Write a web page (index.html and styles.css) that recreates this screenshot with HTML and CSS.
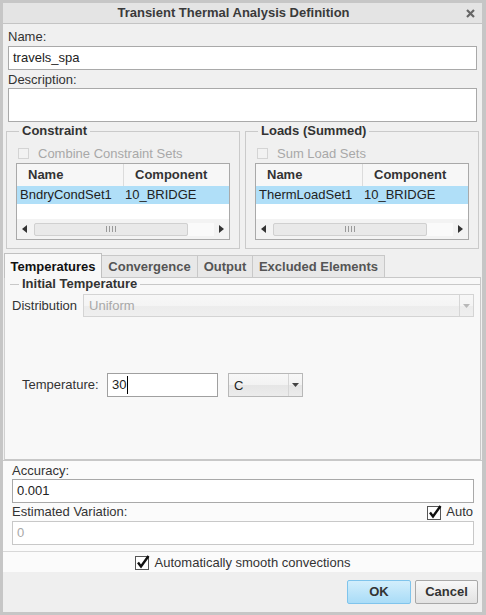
FILE: index.html
```html
<!DOCTYPE html>
<html>
<head>
<meta charset="utf-8">
<title>Transient Thermal Analysis Definition</title>
<link rel="stylesheet" href="styles.css">
</head>
<body>
<div class="window">
  <div class="titlebar">
    <span class="title">Transient Thermal Analysis Definition</span>
    <svg class="close" width="9" height="9" viewBox="0 0 9 9"><path d="M1 1 L8 8 M8 1 L1 8" stroke="#666" stroke-width="2.2" fill="none"/></svg>
  </div>

  <div class="top">
    <div class="lbl lbl-name">Name:</div>
    <div class="input">travels_spa</div>
    <div class="lbl lbl-desc">Description:</div>
    <div class="textarea"></div>

    <div class="groups">
      <fieldset class="group">
        <legend>Constraint</legend>
        <div class="check-row"><span class="cb-off"></span><span>Combine Constraint Sets</span></div>
        <div class="table">
          <div class="thead"><div class="c1">Name</div><div class="c2">Component</div></div>
          <div class="trow"><div class="c1">BndryCondSet1</div><div class="c2">10_BRIDGE</div></div>
          <div class="tempty"></div>
          <div class="hscroll">
            <div class="sbtn"><svg width="5" height="8" viewBox="0 0 5 8"><path d="M5 0 L0 4 L5 8 Z" fill="#333"/></svg></div>
            <div class="thumb"><span class="grip"><i></i><i></i><i></i><i></i></span></div>
            <div class="strack"></div>
            <div class="sbtn"><svg width="5" height="8" viewBox="0 0 5 8"><path d="M0 0 L5 4 L0 8 Z" fill="#333"/></svg></div>
          </div>
        </div>
      </fieldset>
      <fieldset class="group">
        <legend>Loads (Summed)</legend>
        <div class="check-row"><span class="cb-off"></span><span>Sum Load Sets</span></div>
        <div class="table">
          <div class="thead"><div class="c1">Name</div><div class="c2">Component</div></div>
          <div class="trow"><div class="c1">ThermLoadSet1</div><div class="c2">10_BRIDGE</div></div>
          <div class="tempty"></div>
          <div class="hscroll">
            <div class="sbtn"><svg width="5" height="8" viewBox="0 0 5 8"><path d="M5 0 L0 4 L5 8 Z" fill="#333"/></svg></div>
            <div class="thumb"><span class="grip"><i></i><i></i><i></i><i></i></span></div>
            <div class="strack"></div>
            <div class="sbtn"><svg width="5" height="8" viewBox="0 0 5 8"><path d="M0 0 L5 4 L0 8 Z" fill="#333"/></svg></div>
          </div>
        </div>
      </fieldset>
    </div>
  </div>

  <div class="tabs">
    <div class="tab active t1">Temperatures</div>
    <div class="tab t2">Convergence</div>
    <div class="tab t3">Output</div>
    <div class="tab t4">Excluded Elements</div>
    <div class="tabfill"></div>
  </div>

  <div class="panel">
    <div class="sect-title"><span>Initial Temperature</span></div>
    <div class="dist-row">
      <span class="lbl">Distribution</span>
      <div class="select disabled"><span class="sel-text">Uniform</span><span class="sel-arrow"><svg width="7" height="4" viewBox="0 0 7 4"><path d="M0 0 L7 0 L3.5 4 Z" fill="#b8b8b8"/></svg></span></div>
    </div>
    <div class="temp-row">
      <span class="lbl">Temperature:</span>
      <div class="input temp-input">30<span class="caret"></span></div>
      <div class="select unit"><span class="sel-text">C</span><span class="sel-arrow"><svg width="7" height="4" viewBox="0 0 7 4"><path d="M0 0 L7 0 L3.5 4 Z" fill="#444"/></svg></span></div>
    </div>
  </div>

  <div class="accuracy">
    <div class="lbl row-lbl">Accuracy:</div>
    <div class="input">0.001</div>
    <div class="lbl row-lbl est-row">
      <span>Estimated Variation:</span>
      <span class="auto">
        <svg class="cb-on" width="15" height="15" viewBox="0 0 15 15"><rect x="0.5" y="1.5" width="13" height="13" fill="#fff" stroke="#555"/><path d="M3 7.5 L6 11.5 L13.5 1" stroke="#111" stroke-width="2.4" fill="none"/></svg>
        <span>Auto</span>
      </span>
    </div>
    <div class="input disabled-input">0</div>
  </div>

  <div class="smooth">
    <svg class="cb-on" width="15" height="15" viewBox="0 0 15 15"><rect x="0.5" y="1.5" width="13" height="13" fill="#fff" stroke="#555"/><path d="M3 7.5 L6 11.5 L13.5 1" stroke="#111" stroke-width="2.4" fill="none"/></svg>
    <span>Automatically smooth convections</span>
  </div>

  <div class="buttons">
    <div class="btn ok">OK</div>
    <div class="btn cancel">Cancel</div>
  </div>
</div>
</body>
</html>
```

FILE: styles.css
```css
* { box-sizing: border-box; }
html, body { margin: 0; padding: 0; }
body {
  width: 486px;
  height: 615px;
  overflow: hidden;
  font-family: "Liberation Sans", Arial, sans-serif;
  font-size: 13px;
  color: #333;
  background: #c6c6c6;
}
.window {
  width: 486px;
  height: 615px;
  border-style: solid;
  border-color: #c6c6c6;
  border-width: 3px 4px 3px 3px;
  display: flex;
  flex-direction: column;
  background: #f0f0f0;
}

/* title */
.titlebar {
  flex: none;
  height: 21px;
  background: #e4e4e4;
  border-bottom: 1px solid #c4c4c4;
  display: flex;
  align-items: center;
  justify-content: center;
  padding-right: 18px;
  position: relative;
}
.title { font-weight: bold; color: #3a3a3a; line-height: 20px; }
.close { position: absolute; right: 7px; top: 6px; }

/* top section */
.top { flex: none; padding: 0 5px 4px 5px; }
.lbl { line-height: 16px; }
.lbl-name { height: 22px; padding-top: 5px; }
.lbl-desc { height: 18px; padding-top: 2px; }
.input {
  height: 24px;
  border: 1px solid #a9a9a9;
  background: #fff;
  padding-left: 4px;
  line-height: 22px;
  color: #222;
}
.textarea { height: 34px; border: 1px solid #a9a9a9; background: #fff; }

.groups { display: flex; gap: 5px; margin: 1px -2px 0 -2px; }
.group {
  flex: 1;
  min-width: 0;
  margin: 0;
  padding: 0 9px 8px 9px;
  border: 1px solid #cacaca;
}
.group legend {
  font-weight: bold;
  line-height: 16px;
  padding: 0 3px;
  margin-left: 3px;
  color: #333;
}
.check-row {
  margin-top: 6px;
  height: 16px;
  display: flex;
  align-items: center;
  gap: 9px;
  color: #a8a8a8;
}
.cb-off {
  width: 11px;
  height: 11px;
  margin-left: 2px;
  border: 1px solid #d4d4d4;
  background: #f2f2f2;
}
.table {
  margin-top: 2px;
  height: 77px;
  border: 1px solid #a9a9a9;
  background: #fff;
  display: flex;
  flex-direction: column;
}
.thead {
  flex: none;
  height: 22px;
  display: flex;
  font-weight: bold;
  line-height: 22px;
  background: #f7f7f7;
  color: #333;
}
.thead .c1 { width: 107px; padding-left: 11px; border-right: 1px solid #dcdcdc; }
.thead .c2 { padding-left: 11px; }
.trow {
  flex: none;
  height: 18px;
  display: flex;
  line-height: 18px;
  background: #b0dff8;
  color: #222;
}
.trow .c1 { width: 107px; padding-left: 3px; }
.trow .c2 { padding-left: 1px; }
.tempty { flex: 1; }
.hscroll {
  flex: none;
  height: 20px;
  display: flex;
  align-items: center;
  background: #f3f3f3;
}
.sbtn {
  width: 15px;
  height: 20px;
  display: flex;
  align-items: center;
  justify-content: center;
}
.thumb {
  width: 154px;
  height: 13px;
  margin-left: 2px;
  background: #e9e9e9;
  border: 1px solid #d0d0d0;
  border-radius: 2px;
  display: flex;
  align-items: center;
  justify-content: center;
}
.grip { display: flex; gap: 2px; }
.grip i { display: block; width: 1px; height: 6px; background: #9a9a9a; }
.strack { flex: 1; height: 13px; background: #fafafa; }

/* tabs */
.tabs {
  flex: none;
  height: 25px;
  display: flex;
  align-items: flex-end;
  margin: 0 1px;
}
.tab {
  height: 23px;
  padding-top: 3px;
  line-height: 16px;
  text-align: center;
  font-weight: bold;
  color: #555;
  background: #e8e8e8;
  border-top: 1px solid #c8c8c8;
  border-right: 1px solid #c8c8c8;
  border-bottom: 1px solid #c8c8c8;
}
.tab.active {
  height: 25px;
  padding-top: 5px;
  color: #111;
  background: #f8f8f8;
  border-left: 1px solid #c0c0c0;
  border-right: 1px solid #c0c0c0;
  border-top: 1px solid #c0c0c0;
  border-bottom: none;
}
.t1 { width: 98px; }
.t2 { width: 96px; }
.t3 { width: 55px; }
.t4 { width: 132px; }
.tabfill { flex: 1; height: 1px; border-bottom: 1px solid #c8c8c8; }

/* panel */
.panel {
  flex: 1;
  margin: 0 1px;
  background: #f8f8f8;
  border-left: 1px solid #d0d0d0;
  border-right: 1px solid #c8c8c8;
  border-bottom: 1px solid #c8c8c8;
  padding: 0 6px 0 7px;
}
.sect-title {
  height: 12px;
  display: flex;
  align-items: center;
  margin-left: -2px;
  margin-right: -6px;
  font-weight: bold;
  line-height: 12px;
  color: #333;
}
.sect-title::before {
  content: "";
  width: 9px;
  border-top: 1px solid #c8c8c8;
}
.sect-title::after {
  content: "";
  flex: 1;
  border-top: 1px solid #c8c8c8;
}
.sect-title span { padding: 0 3px; }
.dist-row {
  margin-top: 4px;
  height: 23px;
  display: flex;
  align-items: center;
  gap: 6px;
}
.select {
  height: 23px;
  display: flex;
  align-items: center;
  border: 1px solid #b8b8b8;
  background: linear-gradient(#f8f8f8 0%, #f2f2f2 50%, #e6e6e6 51%, #ececec 100%);
}
.select.disabled {
  flex: 1;
  border-color: #d4d4d4;
  background: linear-gradient(#f7f7f7 0%, #f4f4f4 50%, #ececec 51%, #efefef 100%);
  color: #a8a8a8;
}
.sel-text { flex: 1; padding-left: 5px; line-height: 21px; }
.sel-arrow {
  width: 14px;
  height: 21px;
  border-left: 1px solid #d6d6d6;
  display: flex;
  align-items: center;
  justify-content: center;
}
.temp-row {
  margin-top: 56px;
  height: 24px;
  display: flex;
  align-items: center;
  padding-left: 10px;
}
.temp-row .lbl { width: 85px; }
.temp-input {
  width: 111px;
  display: flex;
  align-items: center;
  border-color: #a0a0a0;
}
.caret { display: inline-block; width: 1px; height: 18px; background: #000; margin-left: 1px; }
.select.unit { width: 75px; height: 24px; margin-left: 10px; }
.select.unit .sel-arrow { height: 22px; }
.select.unit .sel-text { color: #222; }

/* accuracy */
.accuracy {
  flex: none;
  height: 92px;
  background: #fbfbfb;
  border-top: 1px solid #c8c8c8;
  border-bottom: 1px solid #d8d8d8;
  padding: 0 8px 6px 9px;
}
.row-lbl { height: 18px; padding-top: 2px; }
.est-row { display: flex; justify-content: space-between; align-items: center; padding-top: 0; }
.auto { display: flex; align-items: center; gap: 4px; margin-right: 1px; }
.disabled-input { color: #a8a8a8; border-color: #c8c8c8; }

.smooth {
  flex: none;
  height: 20px;
  background: #fbfbfb;
  display: flex;
  align-items: center;
  justify-content: center;
  gap: 5px;
  color: #333;
}

.buttons {
  flex: none;
  height: 40px;
  display: flex;
  justify-content: flex-end;
  align-items: flex-start;
  gap: 4px;
  padding: 8px 4px 0 0;
  background: #efefef;
}
.btn {
  height: 24px;
  line-height: 22px;
  text-align: center;
  font-weight: bold;
  color: #333;
  border-radius: 2px;
}
.btn.ok {
  width: 64px;
  border: 1px solid #7fc4ec;
  background: linear-gradient(#d2eefc, #a9dcf7);
}
.btn.cancel {
  width: 63px;
  border: 1px solid #a8a8a8;
  background: linear-gradient(#f8f8f8, #e2e2e2);
}
```
